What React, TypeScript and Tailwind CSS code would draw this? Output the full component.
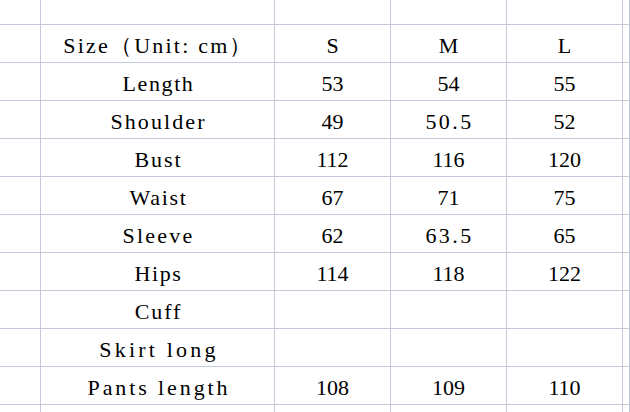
import React from "react";

type Cell = { t: string; c?: string };

const L = (t: string, c: string): Cell => ({ t, c });
const N = (t: string, c = ""): Cell => ({ t, c });

const rows: Cell[][] = [
  [L("Size（Unit: cm）", "tracking-[2.2px] pl-[2px]"), N("S"), N("M"), N("L")],
  [L("Length", "tracking-[1.6px] pl-[2px]"), N("53"), N("54"), N("55")],
  [L("Shoulder", "tracking-[2.1px] pl-[2px]"), N("49"), N("50.5", "tracking-[2.4px] pl-[2px]"), N("52")],
  [L("Bust", "tracking-[1.9px] pl-[2px]"), N("112"), N("116"), N("120")],
  [L("Waist", "tracking-[1.7px] pl-[2px]"), N("67"), N("71"), N("75")],
  [L("Sleeve", "tracking-[2.2px] pl-[2px]"), N("62"), N("63.5", "tracking-[2.4px] pl-[2px]"), N("65")],
  [L("Hips", "tracking-[1.6px] pl-[2px]"), N("114"), N("118"), N("122")],
  [L("Cuff", "tracking-[1.9px] pl-[2px]"), N(""), N(""), N("")],
  [L("Skirt long", "tracking-[3.2px] pl-[3px]"), N(""), N(""), N("")],
  [L("Pants length", "tracking-[2.9px] pl-[3px]"), N("108"), N("109"), N("110")],
];

const line = "border-r border-b border-[#c5cbdb]";

export default function App() {
  return (
    <div className="w-[630px] h-[412px] overflow-hidden bg-white">
      <div className="flex h-[25px]">
        <div className={"w-[41px] shrink-0 " + line} />
        <div className={"w-[234px] shrink-0 " + line} />
        <div className={"w-[116px] shrink-0 " + line} />
        <div className={"w-[116px] shrink-0 " + line} />
        <div className={"w-[116px] shrink-0 " + line} />
        <div className={"flex-1 " + line} />
      </div>
      {rows.map((r, ri) => (
        <div key={ri} className="flex h-[38px]">
          <div className={"w-[41px] shrink-0 " + line} />
          {r.map((c, ci) => (
            <p
              key={ci}
              className={
                (ci === 0 ? "w-[234px] " : "w-[116px] ") +
                "shrink-0 text-center pt-[8px] text-[22px] leading-[25px] text-black font-['Liberation_Serif'] " +
                line +
                " " +
                (c.c || "")
              }
            >
              {c.t}
            </p>
          ))}
          <div className={"flex-1 " + line} />
        </div>
      ))}
      <div className="flex h-[20px]">
        <div className={"w-[41px] shrink-0 " + line} />
        <div className={"w-[234px] shrink-0 " + line} />
        <div className={"w-[116px] shrink-0 " + line} />
        <div className={"w-[116px] shrink-0 " + line} />
        <div className={"w-[116px] shrink-0 " + line} />
        <div className={"flex-1 " + line} />
      </div>
    </div>
  );
}
